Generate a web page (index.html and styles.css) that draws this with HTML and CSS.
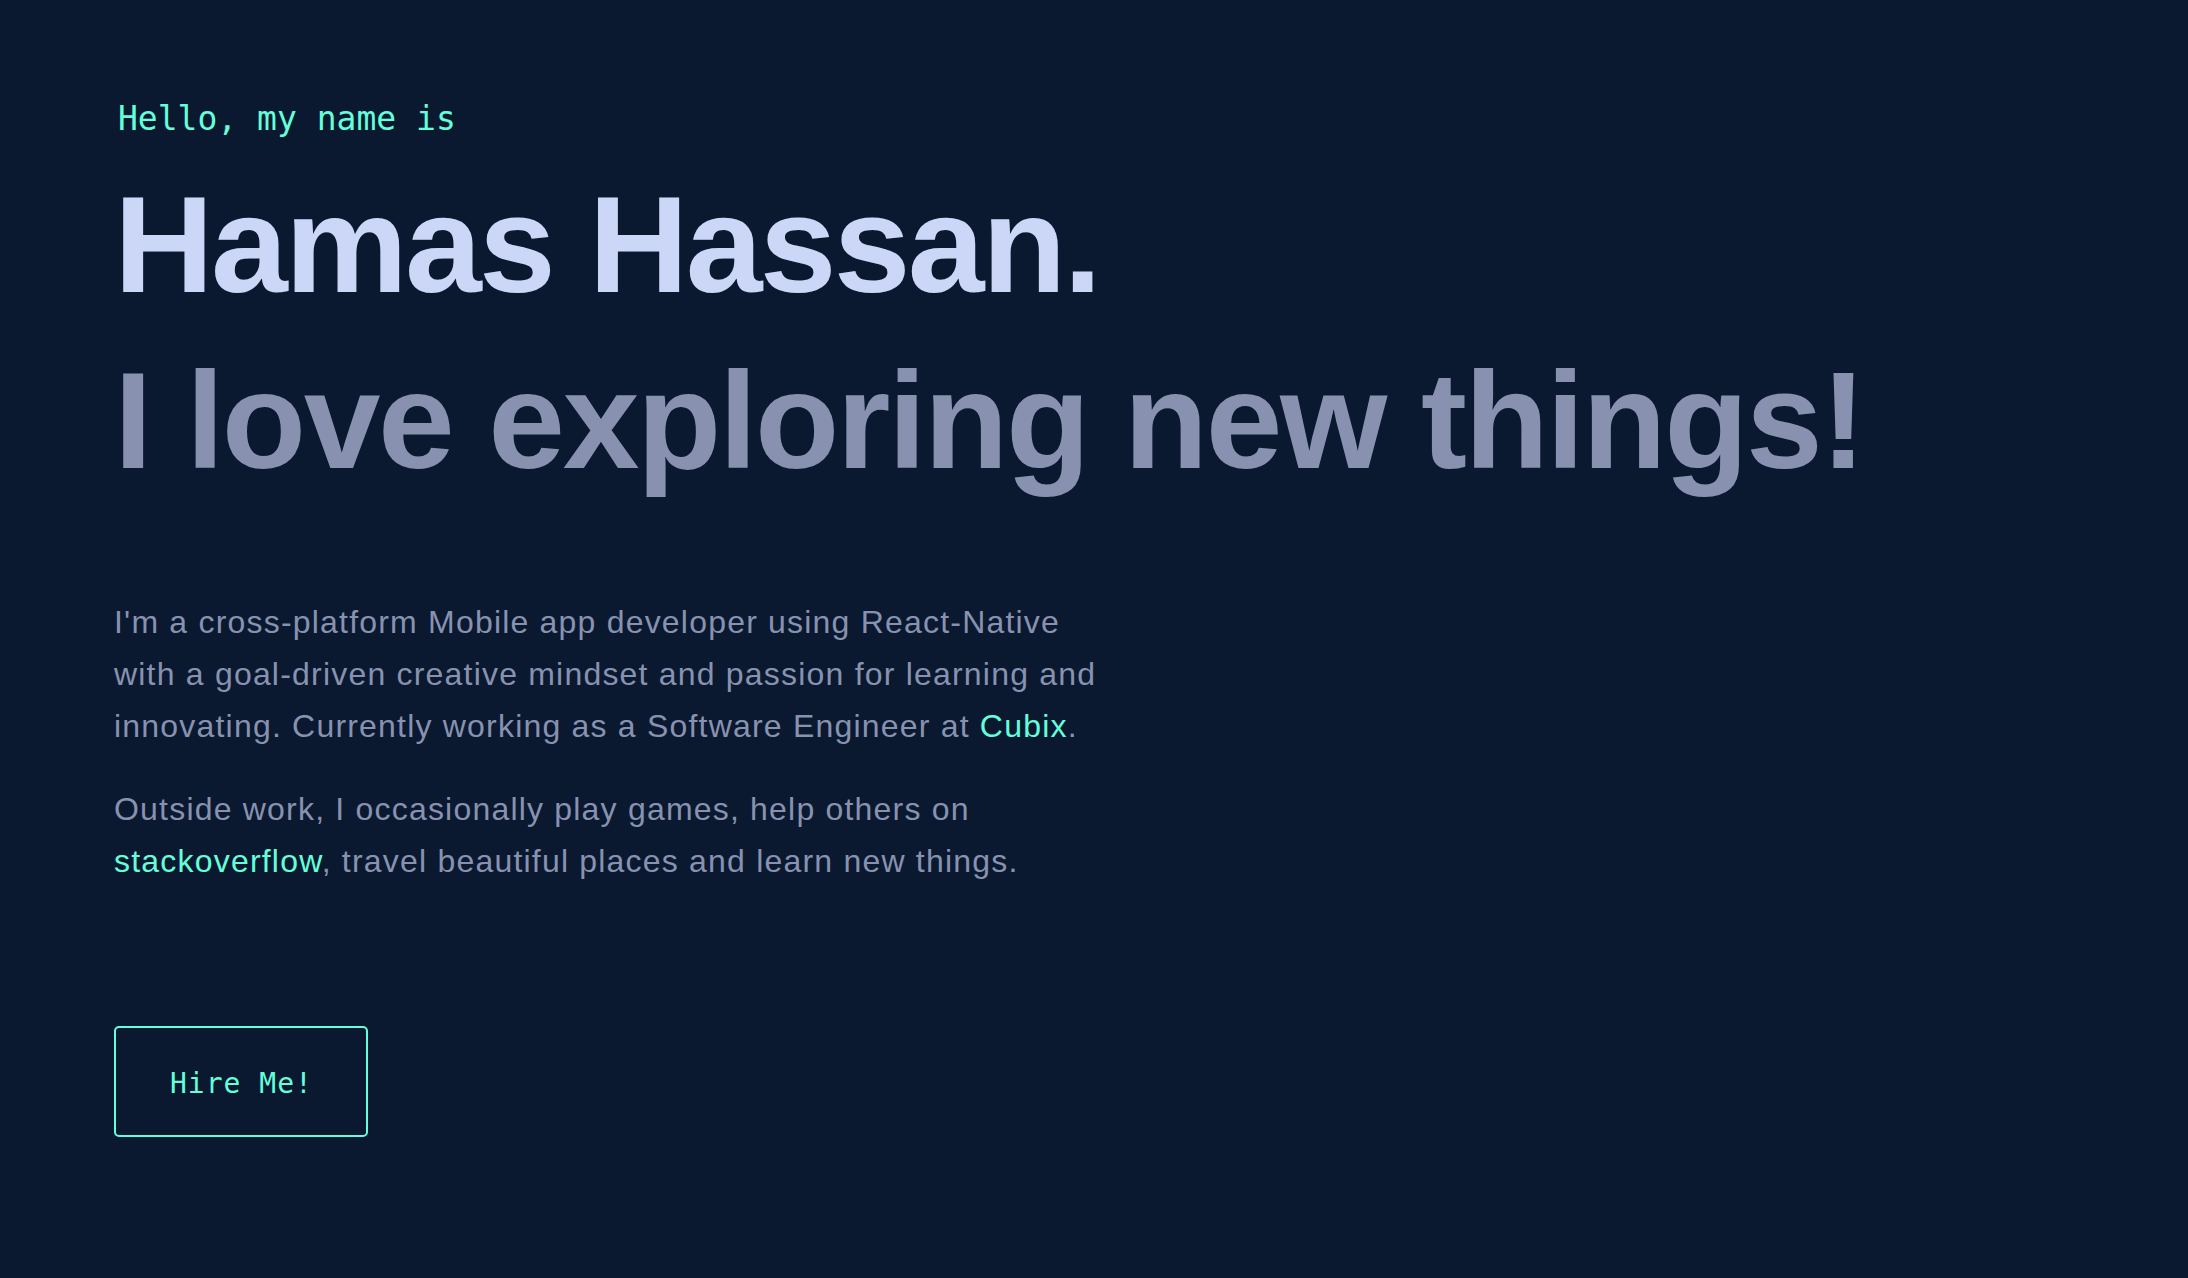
FILE: index.html
```html
<!DOCTYPE html>
<html lang="en">
<head>
<meta charset="utf-8">
<title>Hamas Hassan</title>
<link rel="stylesheet" href="styles.css">
</head>
<body>
<main class="hero">
  <h1 class="hero-hi">Hello, my name is</h1>
  <h2 class="hero-name">Hamas Hassan.</h2>
  <h3 class="hero-tagline">I love exploring new things!</h3>
  <div class="hero-about">
    <p>I'm a cross-platform Mobile app developer using React-Native with a goal-driven creative mindset and passion for learning and innovating. Currently working as a Software Engineer at <a class="link" href="#">Cubix</a>.</p>
    <p>Outside work, I occasionally play games, help others on <a class="link" href="#">stackoverflow</a>, travel beautiful places and learn new things.</p>
  </div>
  <a class="hire-btn" href="#">Hire Me!</a>
</main>
</body>
</html>
```
FILE: styles.css
```css
html, body {
  margin: 0;
  padding: 0;
}

body {
  background: #0a192f;
  min-height: 100vh;
  font-family: "Liberation Sans", Arial, sans-serif;
  color: #8892b0;
}

.hero {
  display: flex;
  flex-direction: column;
  align-items: flex-start;
  padding: 99px 114px 0 114px;
}

.hero-hi {
  margin: 0;
  padding-left: 4px;
  font-family: "DejaVu Sans Mono", "Liberation Mono", monospace;
  font-weight: 400;
  font-size: 33px;
  line-height: 40px;
  color: #64ffda;
}

.hero-name,
.hero-tagline {
  margin: 0;
  font-family: "Liberation Sans", Arial, sans-serif;
  font-weight: 700;
  font-size: 138px;
  line-height: 160px;
  white-space: nowrap;
}

.hero-name {
  margin-top: 25px;
  color: #ccd6f6;
  letter-spacing: -2.7px;
}

.hero-tagline {
  margin-top: 16px;
  color: #8892b0;
  letter-spacing: -2.4px;
}

.hero-about {
  margin-top: 96px;
  max-width: 1000px;
}

.hero-about p {
  margin: 0;
  font-size: 32px;
  line-height: 52px;
  letter-spacing: 1.2px;
  color: #8892b0;
}

.hero-about p + p {
  margin-top: 31px;
}

.link {
  color: #64ffda;
  text-decoration: none;
}

.hire-btn {
  margin-top: 139px;
  display: inline-block;
  padding: 40px 53px 35px 54px;
  border: 2px solid #64ffda;
  border-radius: 5px;
  font-family: "DejaVu Sans Mono", "Liberation Mono", monospace;
  font-size: 28px;
  line-height: 32px;
  letter-spacing: 1px;
  color: #64ffda;
  text-decoration: none;
}
```
